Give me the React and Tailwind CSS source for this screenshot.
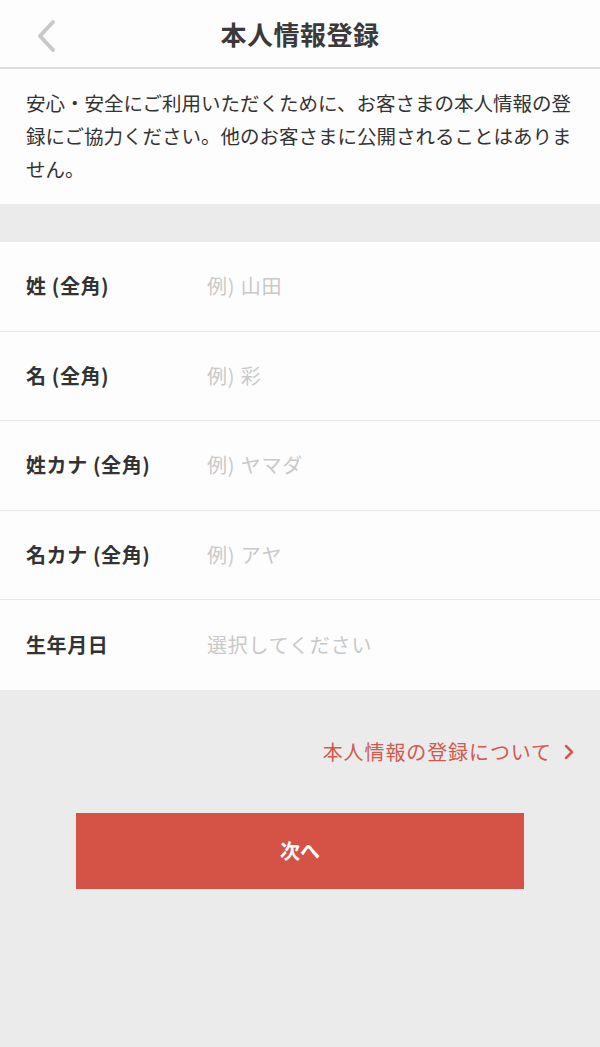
const font = { fontFamily: '"Noto Sans CJK JP", "Noto Sans", sans-serif' };

const fields = [
  { label: "姓 (全角)", placeholder: "例) 山田" },
  { label: "名 (全角)", placeholder: "例) 彩" },
  { label: "姓カナ (全角)", placeholder: "例) ヤマダ" },
  { label: "名カナ (全角)", placeholder: "例) アヤ" },
  { label: "生年月日", placeholder: "選択してください" },
];

export default function App() {
  return (
    <div className="min-h-[1047px] w-[600px] bg-[#ebebeb] text-[#333]" style={font}>
      {/* header */}
      <div className="relative flex h-[69px] items-center justify-center border-b-2 border-[#dcdcdc] bg-[#fdfdfd]">
        <button className="absolute left-[30px] top-[14px] p-1">
          <svg width="24" height="36" viewBox="0 0 24 36" fill="none">
            <path d="M19 4 L6 18 L19 32" stroke="#c9c9c9" strokeWidth="4" strokeLinecap="round" strokeLinejoin="round" />
          </svg>
        </button>
        <h1 className="text-[26px] font-bold tracking-[0.5px] text-[#3a3a3a]">本人情報登録</h1>
      </div>

      {/* intro */}
      <div className="bg-[#fdfdfd] px-[26px] pt-[17px] pb-[19px]">
        <p className="text-[19.5px] leading-[33px] text-[#333]">
          安心・安全にご利用いただくために、お客さまの本人情報の登録にご協力ください。他のお客さまに公開されることはありません。
        </p>
      </div>

      <div className="h-[38px]" />

      {/* form */}
      <div className="bg-[#fdfdfd]">
        {fields.map((f, i) => (
          <div
            key={i}
            className={`flex h-[89.5px] items-center px-[26px] ${i < fields.length - 1 ? "border-b border-[#e8e8e8]" : ""}`}
          >
            <div className="w-[181px] text-[20px] font-bold tracking-[0.6px] text-[#333]">{f.label}</div>
            <div className="text-[20px] tracking-[0.8px] text-[#c9c9c9]">{f.placeholder}</div>
          </div>
        ))}
      </div>

      {/* link */}
      <div className="flex items-center justify-end pt-[47px] pr-[26px]">
        <span className="text-[20px] tracking-[0.9px] text-[#d2594d]">本人情報の登録について</span>
        <svg className="ml-[12px]" width="10" height="16" viewBox="0 0 10 16" fill="none">
          <path d="M2 2 L8 8 L2 14" stroke="#d2594d" strokeWidth="2.5" strokeLinecap="round" strokeLinejoin="round" />
        </svg>
      </div>

      {/* button */}
      <div className="flex justify-center pt-[46px]">
        <button className="h-[76px] w-[448px] bg-[#d45246] text-[20px] font-bold text-white">次へ</button>
      </div>
    </div>
  );
}
